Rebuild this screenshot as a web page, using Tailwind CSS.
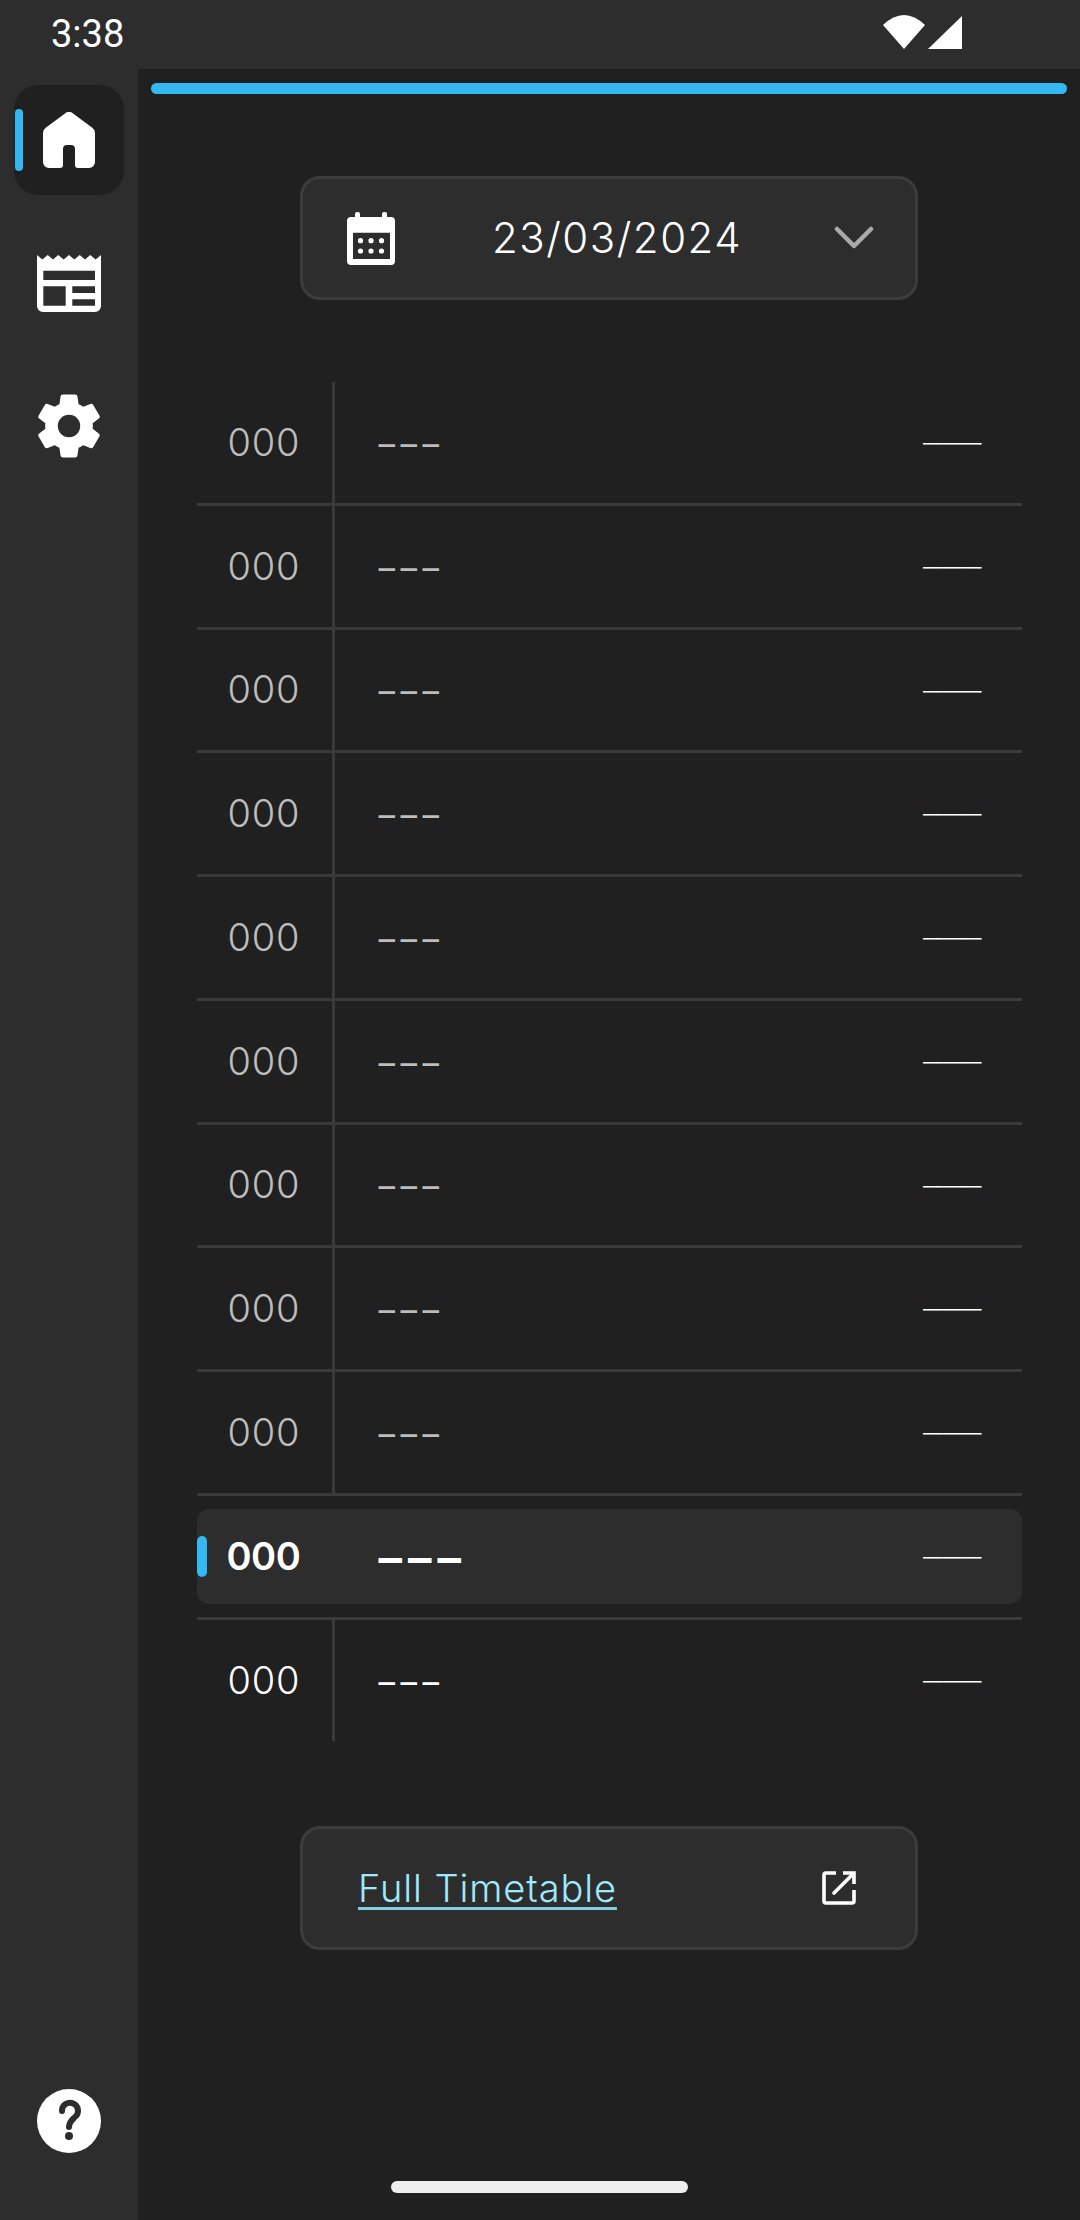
<!DOCTYPE html>
<html>
<head>
<meta charset="utf-8">
<script src="https://cdn.jsdelivr.net/npm/@tailwindcss/browser@4"></script>
</head>
<body class="m-0 bg-[#202020]">
<div class="relative w-[1080px] h-[2220px] flex flex-col bg-[#202020] overflow-hidden font-['Inter',sans-serif] text-white">
  <!-- status bar -->
  <div class="h-[69px] shrink-0 bg-[#2d2d2d] flex items-start relative">
    <span class="ml-[51px] mt-[12px] font-['Roboto',sans-serif] text-[38px] leading-[45px]">3:38</span>
    <svg class="absolute left-[880px] top-[12px]" width="86" height="40" viewBox="880 12 86 40"><path fill="#fff" d="M883 25Q904 5 925 25L904 49Z"/><path fill="#fff" d="M928 49L962 16V49Z"/></svg>
  </div>
  <div class="flex-1 flex min-h-0">
    <!-- sidebar -->
    <aside class="w-[138px] shrink-0 bg-[#2d2d2d] flex flex-col items-center pt-[16px] pb-[67px]">
      <div class="relative w-[110px] h-[110px] rounded-[24px] bg-[#202020] flex items-center justify-center">
        <span class="absolute left-[1px] top-[24px] w-[8px] h-[62px] rounded-full bg-[#33b8f2]"></span>
        <svg width="52" height="56" viewBox="0 0 52 56"><path fill="#fff" d="M23 .8a5 5 0 0 1 6 0L49 15.5a7 7 0 0 1 3 5.5V50a6 6 0 0 1-6 6H35a3 3 0 0 1-3-3V37a4 4 0 0 0-4-4h-4a4 4 0 0 0-4 4V53a3 3 0 0 1-3 3H6a6 6 0 0 1-6-6V21a7 7 0 0 1 3-5.5Z"/></svg>
      </div>
      <svg class="mt-[60px]" width="64" height="57" viewBox="0 0 64 57"><path fill="#fff" fill-rule="evenodd" d="M0 0L5.3 4.5L10.7 0L16 4.5L21.3 0L26.7 4.5L32 0L37.3 4.5L42.7 0L48 4.5L53.3 0L58.7 4.5L64 0V51a6 6 0 0 1-6 6H6a6 6 0 0 1-6-6ZM6.3 15.7V25H58V15.7ZM6.3 31.3V50.7H28.7V31.3ZM35.3 31.3V38H58V31.3ZM35.3 44.3V50.7H58V44.3Z"/></svg>
      <svg class="mt-[82px]" width="62" height="64" viewBox="2.4 2 19.2 20"><path fill="#fff" stroke="#fff" stroke-width=".5" stroke-linejoin="round" d="M19.14 12.94c.04-.3.06-.61.06-.94 0-.32-.02-.64-.07-.94l2.03-1.58c.18-.14.23-.41.12-.61l-1.92-3.32c-.12-.22-.37-.29-.59-.22l-2.39.96c-.5-.38-1.03-.7-1.62-.94l-.36-2.54c-.04-.24-.24-.41-.48-.41h-3.84c-.24 0-.43.17-.47.41l-.36 2.54c-.59.24-1.13.57-1.62.94l-2.39-.96c-.22-.08-.47 0-.59.22L2.74 8.87c-.12.21-.08.47.12.61l2.03 1.58c-.05.3-.09.63-.09.94s.02.64.07.94l-2.03 1.58c-.18.14-.23.41-.12.61l1.92 3.32c.12.22.37.29.59.22l2.39-.96c.5.38 1.03.7 1.62.94l.36 2.54c.05.24.24.41.48.41h3.84c.24 0 .44-.17.47-.41l.36-2.54c.59-.24 1.13-.56 1.62-.94l2.39.96c.22.08.47 0 .59-.22l1.92-3.32c.12-.22.07-.47-.12-.61l-2.01-1.58z"/><circle cx="12" cy="12" r="3.5" fill="#2d2d2d"/></svg>
      <svg class="mt-auto" width="64" height="64" viewBox="0 0 64 64"><circle cx="32" cy="32" r="32" fill="#fff"/><path fill="none" stroke="#2d2d2d" stroke-width="6" stroke-linecap="round" d="M25 22a8 8 0 1 1 13 6c-3 3-6 5-6 10"/><circle cx="32" cy="47" r="4" fill="#2d2d2d"/></svg>
    </aside>
    <!-- main -->
    <main class="flex-1 min-w-0 flex flex-col items-center">
      <div class="mt-[14px] w-[916px] h-[11px] rounded-full bg-[#33b8f2] shrink-0"></div>

      <div class="mt-[82px] w-[618px] h-[124px] shrink-0 rounded-[20px] border-[3px] border-[#3c3c3c] bg-[#2d2d2d] flex items-center">
        <svg class="ml-[44px] shrink-0" width="48" height="53" viewBox="0 0 48 53"><rect x="8" y="0" width="5" height="10" rx="2" fill="#fff"/><rect x="35" y="0" width="5" height="10" rx="2" fill="#fff"/><path fill="#fff" fill-rule="evenodd" d="M4 5H44a4 4 0 0 1 4 4V49a4 4 0 0 1-4 4H4a4 4 0 0 1-4-4V9a4 4 0 0 1 4-4ZM6 20.7V47H43V20.7Z"/><g fill="#fff"><circle cx="13.5" cy="28.7" r="2.6"/><circle cx="24" cy="28.7" r="2.6"/><circle cx="34.5" cy="28.7" r="2.6"/><circle cx="13.5" cy="39" r="2.6"/><circle cx="24" cy="39" r="2.6"/><circle cx="34.5" cy="39" r="2.6"/></g></svg>
        <span class="ml-[97px] text-[42px] leading-none font-[350] tracking-[1.5px] whitespace-nowrap">23/03/2024</span>
        <svg class="ml-auto mr-[41px] shrink-0" width="40" height="24" viewBox="0 0 40 24"><path fill="none" stroke="#aaaaaa" stroke-width="4.5" stroke-linecap="round" stroke-linejoin="round" d="M3 3L20 20L37 3"/></svg>
      </div>

      <div class="mt-[82px] w-[825px] shrink-0 flex flex-col">
        <div class="h-[123.75px] border-b-[3px] border-[#3a3a3a] flex items-center"><div class="self-stretch w-[138px] border-r-[3px] border-[#3a3a3a] flex items-center pl-[31px] text-[38px] font-[350] tracking-[0.75px] text-[#bdbdbd]">000</div><span class="ml-[44px] mt-[4px] text-[33px] leading-none font-normal tracking-[5.5px] text-[#bdbdbd]">–––</span><span class="ml-auto mr-[40px] mt-[3px] text-[19.5px] leading-none">———</span></div>
        <div class="h-[123.75px] border-b-[3px] border-[#3a3a3a] flex items-center"><div class="self-stretch w-[138px] border-r-[3px] border-[#3a3a3a] flex items-center pl-[31px] text-[38px] font-[350] tracking-[0.75px] text-[#bdbdbd]">000</div><span class="ml-[44px] mt-[4px] text-[33px] leading-none font-normal tracking-[5.5px] text-[#bdbdbd]">–––</span><span class="ml-auto mr-[40px] mt-[3px] text-[19.5px] leading-none">———</span></div>
        <div class="h-[123.75px] border-b-[3px] border-[#3a3a3a] flex items-center"><div class="self-stretch w-[138px] border-r-[3px] border-[#3a3a3a] flex items-center pl-[31px] text-[38px] font-[350] tracking-[0.75px] text-[#bdbdbd]">000</div><span class="ml-[44px] mt-[4px] text-[33px] leading-none font-normal tracking-[5.5px] text-[#bdbdbd]">–––</span><span class="ml-auto mr-[40px] mt-[3px] text-[19.5px] leading-none">———</span></div>
        <div class="h-[123.75px] border-b-[3px] border-[#3a3a3a] flex items-center"><div class="self-stretch w-[138px] border-r-[3px] border-[#3a3a3a] flex items-center pl-[31px] text-[38px] font-[350] tracking-[0.75px] text-[#bdbdbd]">000</div><span class="ml-[44px] mt-[4px] text-[33px] leading-none font-normal tracking-[5.5px] text-[#bdbdbd]">–––</span><span class="ml-auto mr-[40px] mt-[3px] text-[19.5px] leading-none">———</span></div>
        <div class="h-[123.75px] border-b-[3px] border-[#3a3a3a] flex items-center"><div class="self-stretch w-[138px] border-r-[3px] border-[#3a3a3a] flex items-center pl-[31px] text-[38px] font-[350] tracking-[0.75px] text-[#bdbdbd]">000</div><span class="ml-[44px] mt-[4px] text-[33px] leading-none font-normal tracking-[5.5px] text-[#bdbdbd]">–––</span><span class="ml-auto mr-[40px] mt-[3px] text-[19.5px] leading-none">———</span></div>
        <div class="h-[123.75px] border-b-[3px] border-[#3a3a3a] flex items-center"><div class="self-stretch w-[138px] border-r-[3px] border-[#3a3a3a] flex items-center pl-[31px] text-[38px] font-[350] tracking-[0.75px] text-[#bdbdbd]">000</div><span class="ml-[44px] mt-[4px] text-[33px] leading-none font-normal tracking-[5.5px] text-[#bdbdbd]">–––</span><span class="ml-auto mr-[40px] mt-[3px] text-[19.5px] leading-none">———</span></div>
        <div class="h-[123.75px] border-b-[3px] border-[#3a3a3a] flex items-center"><div class="self-stretch w-[138px] border-r-[3px] border-[#3a3a3a] flex items-center pl-[31px] text-[38px] font-[350] tracking-[0.75px] text-[#bdbdbd]">000</div><span class="ml-[44px] mt-[4px] text-[33px] leading-none font-normal tracking-[5.5px] text-[#bdbdbd]">–––</span><span class="ml-auto mr-[40px] mt-[3px] text-[19.5px] leading-none">———</span></div>
        <div class="h-[123.75px] border-b-[3px] border-[#3a3a3a] flex items-center"><div class="self-stretch w-[138px] border-r-[3px] border-[#3a3a3a] flex items-center pl-[31px] text-[38px] font-[350] tracking-[0.75px] text-[#bdbdbd]">000</div><span class="ml-[44px] mt-[4px] text-[33px] leading-none font-normal tracking-[5.5px] text-[#bdbdbd]">–––</span><span class="ml-auto mr-[40px] mt-[3px] text-[19.5px] leading-none">———</span></div>
        <div class="h-[123.75px] border-b-[3px] border-[#3a3a3a] flex items-center"><div class="self-stretch w-[138px] border-r-[3px] border-[#3a3a3a] flex items-center pl-[31px] text-[38px] font-[350] tracking-[0.75px] text-[#bdbdbd]">000</div><span class="ml-[44px] mt-[4px] text-[33px] leading-none font-normal tracking-[5.5px] text-[#bdbdbd]">–––</span><span class="ml-auto mr-[40px] mt-[3px] text-[19.5px] leading-none">———</span></div>
        <!-- current period -->
        <div class="h-[123.75px] border-b-[3px] border-[#3a3a3a] py-[13px] flex">
          <div class="relative flex-1 rounded-[12px] bg-[#2d2d2d] flex items-center">
            <span class="absolute left-0 top-[27px] w-[10px] h-[41px] rounded-full bg-[#33b8f2]"></span>
            <span class="w-[138px] pl-[30px] text-[38px] font-semibold tracking-[-0.5px]">000</span>
            <span class="ml-[44px] mt-[3px] text-[47px] leading-none font-semibold tracking-[6px]">–––</span>
            <span class="ml-auto mr-[40px] mt-[3px] text-[19.5px] leading-none">———</span>
          </div>
        </div>
        <div class="h-[121px] flex items-center"><div class="self-stretch w-[138px] border-r-[3px] border-[#3a3a3a] flex items-center pl-[31px] text-[38px] font-[350] tracking-[0.75px] text-white">000</div><span class="ml-[44px] mt-[4px] text-[33px] leading-none font-normal tracking-[5.5px] text-white">–––</span><span class="ml-auto mr-[40px] mt-[3px] text-[19.5px] leading-none">———</span></div>
      </div>

      <div class="mt-[85px] w-[618px] h-[124px] shrink-0 rounded-[20px] border-[3px] border-[#3c3c3c] bg-[#2d2d2d] flex items-center">
        <span class="ml-[55px] text-[38px] leading-none font-light tracking-[0.9px] text-[#9eeafc] underline underline-offset-[5px] decoration-[3px] decoration-[#7fcfe0] whitespace-nowrap">Full Timetable</span>
        <svg class="ml-auto mr-[59px] shrink-0" width="34" height="34" viewBox="0 0 34 34"><path fill="none" stroke="#fff" stroke-width="3.6" stroke-linejoin="round" d="M14 2H4a2 2 0 0 0-2 2v26a2 2 0 0 0 2 2h26a2 2 0 0 0 2-2V19"/><path fill="none" stroke="#fff" stroke-width="3.6" stroke-linecap="round" d="M12 22L30 4"/><path fill="none" stroke="#fff" stroke-width="3.6" d="M21 2H32V13"/></svg>
      </div>
    </main>
  </div>
  <span class="absolute left-[391px] top-[2181px] w-[297px] h-[12px] rounded-full bg-[#eeeeee]"></span>
</div>
</body>
</html>
